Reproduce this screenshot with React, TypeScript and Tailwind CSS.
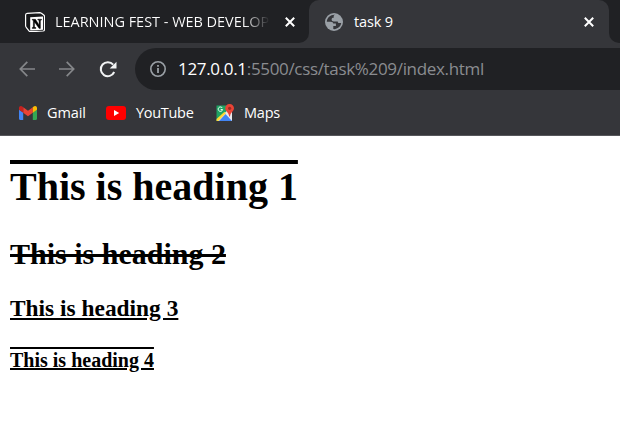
import React from "react";

function NotionIcon() {
  return (
    <svg className="h-5 w-5 shrink-0" viewBox="0 0 20 20">
      <path d="M2.2 1.3 14.6.6c.8 0 1.2.1 1.8.6l2.3 1.8c.6.5.8.8.8 1.6v12.8c0 1-.4 1.5-1.4 1.6L5.8 19.7c-.8 0-1.3-.2-1.8-.8L1.4 15.6C.9 15 .6 14.5.6 13.8V3c0-1 .6-1.6 1.6-1.7Z" fill="#17181a" stroke="#fff" strokeWidth="1.2" />
      <path d="M5.2 5.2 18 4.5v13.3L5.200 18.600Z" fill="#fff" />
      <path d="M7.200 7.300h3.300l3.600 5.600V8.300l-1.300-.3v-.8h3.700V8l-1.100.4v8h-1.300L9.500 10v5.300l1.400.3v.8H7.200v-.8l1.100-.4V8.400L7.200 8Z" fill="#000" stroke="#000" strokeWidth=".4" />
    </svg>
  );
}

function GlobeIcon() {
  return (
    <svg className="h-[18px] w-[18px] shrink-0" viewBox="0 0 18 18">
      <circle cx="9" cy="9" r="9" fill="#9aa0a6" />
      <path d="M10.200 1.800C5.700 1.400 2 4.600 1.800 8.700h4c1.500 0 2.400.7 2.400 1.900h2.700v2.300H8.300v3.200c3.900.4 7.400-2.200 7.900-6h-1.800c-1.200 0-1.600-.6-1.600-1.700H8.900c-1.500 0-2.300-.7-2.300-1.900 0-1.300.8-1.700 2.100-1.700V3.400c0-.9.600-1.300 1.500-1.600Z" fill="#35363a" />
    </svg>
  );
}

function CloseIcon() {
  return (
    <svg className="h-[10px] w-[10px] shrink-0" viewBox="0 0 10 10">
      <path d="m.8.800 8.400 8.400M9.200.8.800 9.200" stroke="#fff" strokeWidth="2" />
    </svg>
  );
}

function ArrowIcon({ flip = false }: { flip?: boolean }) {
  return (
    <svg className={flip ? "h-4 w-4 -scale-x-100" : "h-4 w-4"} viewBox="0 0 16 16">
      <path d="M16 8H1.500M8.300.9 1.300 8l7 7.100" fill="none" stroke="#85878a" strokeWidth="1.700" />
    </svg>
  );
}

function ReloadIcon() {
  return (
    <svg className="h-[17px] w-[18px]" viewBox="0 0 18 17">
      <path d="M14.200 3.700A7 7 0 1 0 15.200 11" fill="none" stroke="#f1f3f4" strokeWidth="2" />
      <path d="M17.500.7v6.800h-6.800Z" fill="#f1f3f4" />
    </svg>
  );
}

function InfoIcon() {
  return (
    <svg className="h-4 w-4 shrink-0" viewBox="0 0 16 16">
      <circle cx="8" cy="8" r="7.200" fill="none" stroke="#9aa0a6" strokeWidth="1.600" />
      <path d="M8 7v5M8 4v1.800" stroke="#9aa0a6" strokeWidth="1.800" />
    </svg>
  );
}

function GmailIcon() {
  return (
    <svg className="h-[14px] w-[18px] shrink-0" viewBox="0 0 18 14">
      <path d="M0 3.500 4.200 6.500V14H1.200C.5 14 0 13.500 0 12.800Z" fill="#4285f4" />
      <path d="m13.800 6.500 4.200-3v9.300c0 .7-.5 1.200-1.200 1.200h-3Z" fill="#34a853" />
      <path d="M4.200 1.200 9 4.800l4.800-3.600v5.500L9 10.300 4.200 6.700Z" fill="#ea4335" />
      <path d="M0 3.800V2C0 .2 1.900-.6 3.300.5l.9.700v5.500Z" fill="#c5221f" />
      <path d="M13.800 1.200 14.700.5C16.100-.6 18 .2 18 2v1.800l-4.200 2.900Z" fill="#fbbc04" />
    </svg>
  );
}

function YouTubeIcon() {
  return (
    <svg className="h-[14px] w-5 shrink-0" viewBox="0 0 20 14">
      <rect width="20" height="14" rx="3" fill="#f00" />
      <path d="m8 4 5.200 3L8 10Z" fill="#fff" />
    </svg>
  );
}

function MapsIcon() {
  return (
    <svg className="h-[18px] w-[18px] shrink-0" viewBox="0 0 18 18">
      <path d="M.5 1.500h15V17H.5Z" fill="#1fa463" />
      <path d="M1 16 14 4l2 2v11H2Z" fill="#e8eaed" />
      <path d="m3 17 6.500-7 6.500 7Z" fill="#4285f4" />
      <path d="m.5 15 8-7.300 1.200 1.800-7.500 7.500H.5Z" fill="#fdd835" />
      <path d="M6.300 4A2.200 2.200 0 1 0 6.600 5.600H4.700" fill="none" stroke="#fff" />
      <path d="M13.600 0A4.300 4.300 0 0 1 18 4.300c0 3-3.600 4-4 8.200h-.8c-.4-4.200-4-5.200-4-8.200A4.300 4.300 0 0 1 13.600 0Z" fill="#ea4335" />
      <circle cx="13.600" cy="4.300" r="1.600" fill="#992b24" />
    </svg>
  );
}

export default function App() {
  return (
    <div className="flex h-[438px] w-[620px] flex-col overflow-hidden bg-white font-['Open_Sans',sans-serif] text-white">
      <div className="flex h-[43px] shrink-0 bg-[#35363a]">
        <div className="flex w-[309px] items-center rounded-br-[10px] bg-[#202124] pl-[25px]">
          <NotionIcon />
          <div className="ml-2.5 w-[215px] overflow-hidden bg-linear-to-r from-white from-88% to-[#202124] bg-clip-text text-[14.5px] leading-5 tracking-[-0.03px] whitespace-nowrap text-transparent">LEARNING FEST - WEB DEVELOP</div>
          <div className="ml-[15px]"><CloseIcon /></div>
        </div>
        <div className="w-[300px] bg-[#202124]">
          <div className="flex h-[43px] items-center rounded-t-[10px] bg-[#35363a] pl-4">
            <GlobeIcon />
            <span className="ml-[11px] text-[14.5px] leading-5 tracking-[-0.15px]">task 9</span>
            <div className="mr-[15px] ml-auto"><CloseIcon /></div>
          </div>
        </div>
        <div className="flex-1 rounded-bl-[10px] bg-[#202124]" />
      </div>
      <div className="flex h-[47px] shrink-0 items-end bg-[#35363a]">
        <div className="flex h-[42px] w-[135px] items-center pl-[19px]">
          <ArrowIcon />
          <div className="ml-6"><ArrowIcon flip /></div>
          <div className="ml-6"><ReloadIcon /></div>
        </div>
        <div className="flex h-[42px] flex-1 items-center rounded-l-full bg-[#202124] pl-[15px]">
          <InfoIcon />
          <span className="ml-3 text-[17px] leading-6 tracking-[-0.33px] whitespace-nowrap text-[#8a8c90]"><span className="text-white">127.0.0.1</span>:5500/css/task%209/index.html</span>
        </div>
      </div>
      <div className="flex h-[46px] shrink-0 items-center border-b border-[#56575b] bg-[#35363a] pl-[19px] text-[14.5px] leading-5">
        <GmailIcon />
        <span className="ml-2.5 w-[59px] tracking-[-0.1px]">Gmail</span>
        <YouTubeIcon />
        <span className="ml-2.5 w-[80px] tracking-[-0.3px]">YouTube</span>
        <MapsIcon />
        <span className="ml-2.5 tracking-[-0.2px]">Maps</span>
      </div>
      <main className="flex flex-col items-start pt-7 pl-2.5 font-['Liberation_Serif',serif] font-bold text-black">
        <h1 className="text-[40px] leading-[45px] overline">This is heading 1</h1>
        <h2 className="mt-7 text-[30px] leading-[33px] line-through">This is heading 2</h2>
        <h3 className="mt-[25px] text-[23.4px] leading-[26px] underline">This is heading 3</h3>
        <h4 className="mt-7 text-[20px] leading-[22px] [text-decoration-line:underline_overline]">This is heading 4</h4>
      </main>
    </div>
  );
}
